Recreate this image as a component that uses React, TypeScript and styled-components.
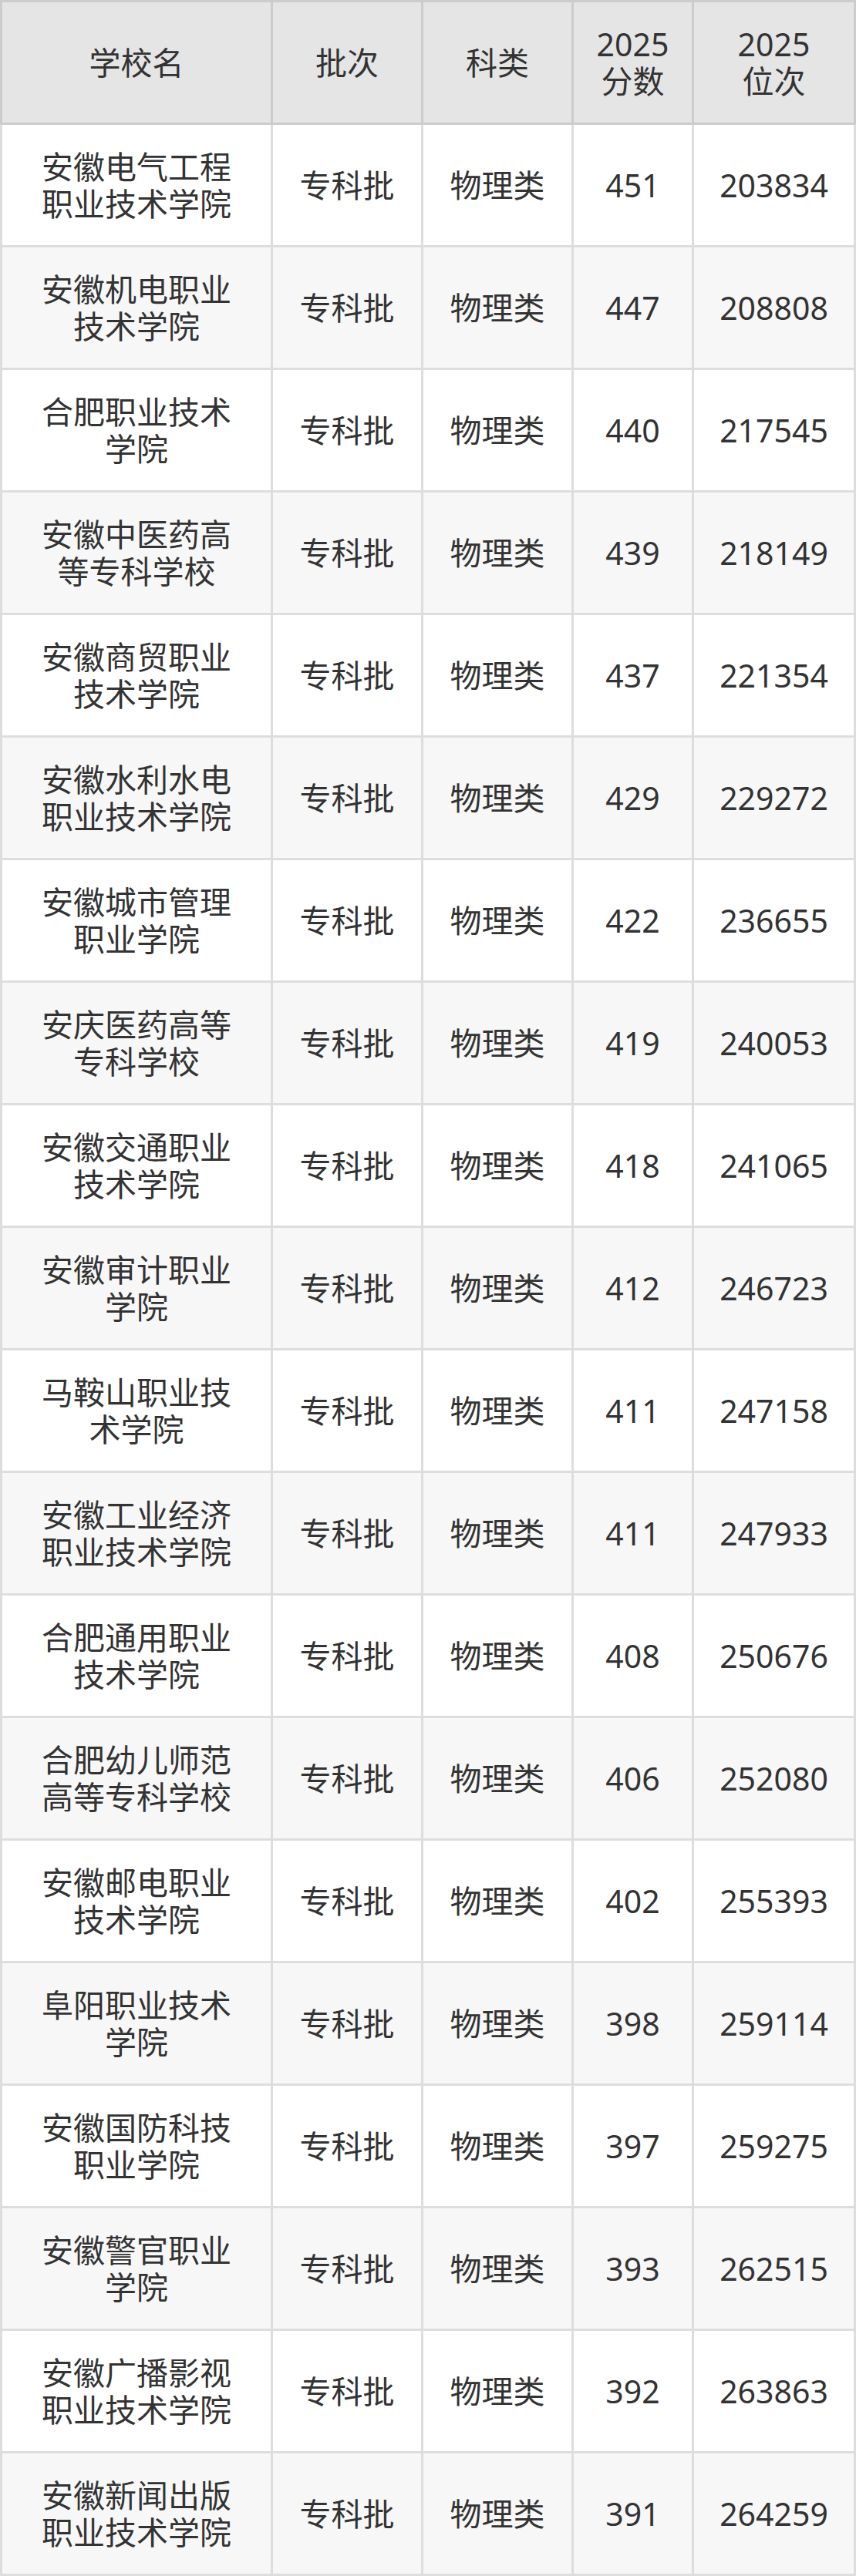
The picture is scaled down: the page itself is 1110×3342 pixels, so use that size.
import { FunctionComponent } from "react";
import styled, { createGlobalStyle } from "styled-components";

const GlobalStyle = createGlobalStyle`
  html, body {
    margin: 0;
    padding: 0;
    background: #fff;
  }
  body {
    font-family: "Noto Sans", "Noto Sans CJK SC", sans-serif;
    color: #333;
  }
`;

type Row = {
  name: string;
  batch: string;
  subject: string;
  score: number;
  rank: number;
};

const rows: Row[] = [
  ["安徽电气工程职业技术学院", 451, 203834],
  ["安徽机电职业技术学院", 447, 208808],
  ["合肥职业技术学院", 440, 217545],
  ["安徽中医药高等专科学校", 439, 218149],
  ["安徽商贸职业技术学院", 437, 221354],
  ["安徽水利水电职业技术学院", 429, 229272],
  ["安徽城市管理职业学院", 422, 236655],
  ["安庆医药高等专科学校", 419, 240053],
  ["安徽交通职业技术学院", 418, 241065],
  ["安徽审计职业学院", 412, 246723],
  ["马鞍山职业技术学院", 411, 247158],
  ["安徽工业经济职业技术学院", 411, 247933],
  ["合肥通用职业技术学院", 408, 250676],
  ["合肥幼儿师范高等专科学校", 406, 252080],
  ["安徽邮电职业技术学院", 402, 255393],
  ["阜阳职业技术学院", 398, 259114],
  ["安徽国防科技职业学院", 397, 259275],
  ["安徽警官职业学院", 393, 262515],
  ["安徽广播影视职业技术学院", 392, 263863],
  ["安徽新闻出版职业技术学院", 391, 264259],
].map(([name, score, rank]) => ({
  name: name as string,
  batch: "专科批",
  subject: "物理类",
  score: score as number,
  rank: rank as number,
}));

// border-box widths, first one includes the left border
const colWidths = [354, 195, 195, 156, 210];

const Table = styled.table`
  width: 1110px;
  table-layout: fixed;
  border-collapse: separate;
  border-spacing: 0;
  font-size: 41px;
  line-height: 48px;
  text-align: center;
`;

const Col = styled.col<{ $w: number }>`
  width: ${(p) => p.$w}px;
`;

const HeadCell = styled.th`
  box-sizing: content-box;
  height: 156px;
  padding: 0 10px;
  background: #e5e5e5;
  border-top: 3px solid #cccccc;
  border-right: 3px solid #cccccc;
  border-bottom: 3px solid #cccccc;
  font-weight: 400;
  vertical-align: middle;
  &:first-child {
    border-left: 3px solid #cccccc;
  }
`;

const BodyRow = styled.tr<{ $striped: boolean }>`
  background: ${(p) => (p.$striped ? "#f7f7f7" : "#ffffff")};
`;

const Cell = styled.td<{ $wide?: boolean }>`
  box-sizing: content-box;
  height: 156px;
  padding: 0 ${(p) => (p.$wide ? 44 : 6)}px;
  border-right: 3px solid #dddddd;
  border-bottom: 3px solid #dddddd;
  vertical-align: middle;
  word-break: break-all;
  &:first-child {
    border-left: 3px solid #dddddd;
  }
`;

const App: FunctionComponent = () => {
  return (
    <>
      <GlobalStyle />
      <Table>
        <colgroup>
          {colWidths.map((w, i) => (
            <Col key={i} $w={w} />
          ))}
        </colgroup>
        <thead>
          <tr>
            <HeadCell>学校名</HeadCell>
            <HeadCell>批次</HeadCell>
            <HeadCell>科类</HeadCell>
            <HeadCell>
              2025
              <br />
              分数
            </HeadCell>
            <HeadCell>
              2025
              <br />
              位次
            </HeadCell>
          </tr>
        </thead>
        <tbody>
          {rows.map((row, index) => (
            <BodyRow key={index} $striped={index % 2 === 1}>
              <Cell $wide>{row.name}</Cell>
              <Cell>{row.batch}</Cell>
              <Cell>{row.subject}</Cell>
              <Cell>{row.score}</Cell>
              <Cell>{row.rank}</Cell>
            </BodyRow>
          ))}
        </tbody>
      </Table>
    </>
  );
};

export default App;
